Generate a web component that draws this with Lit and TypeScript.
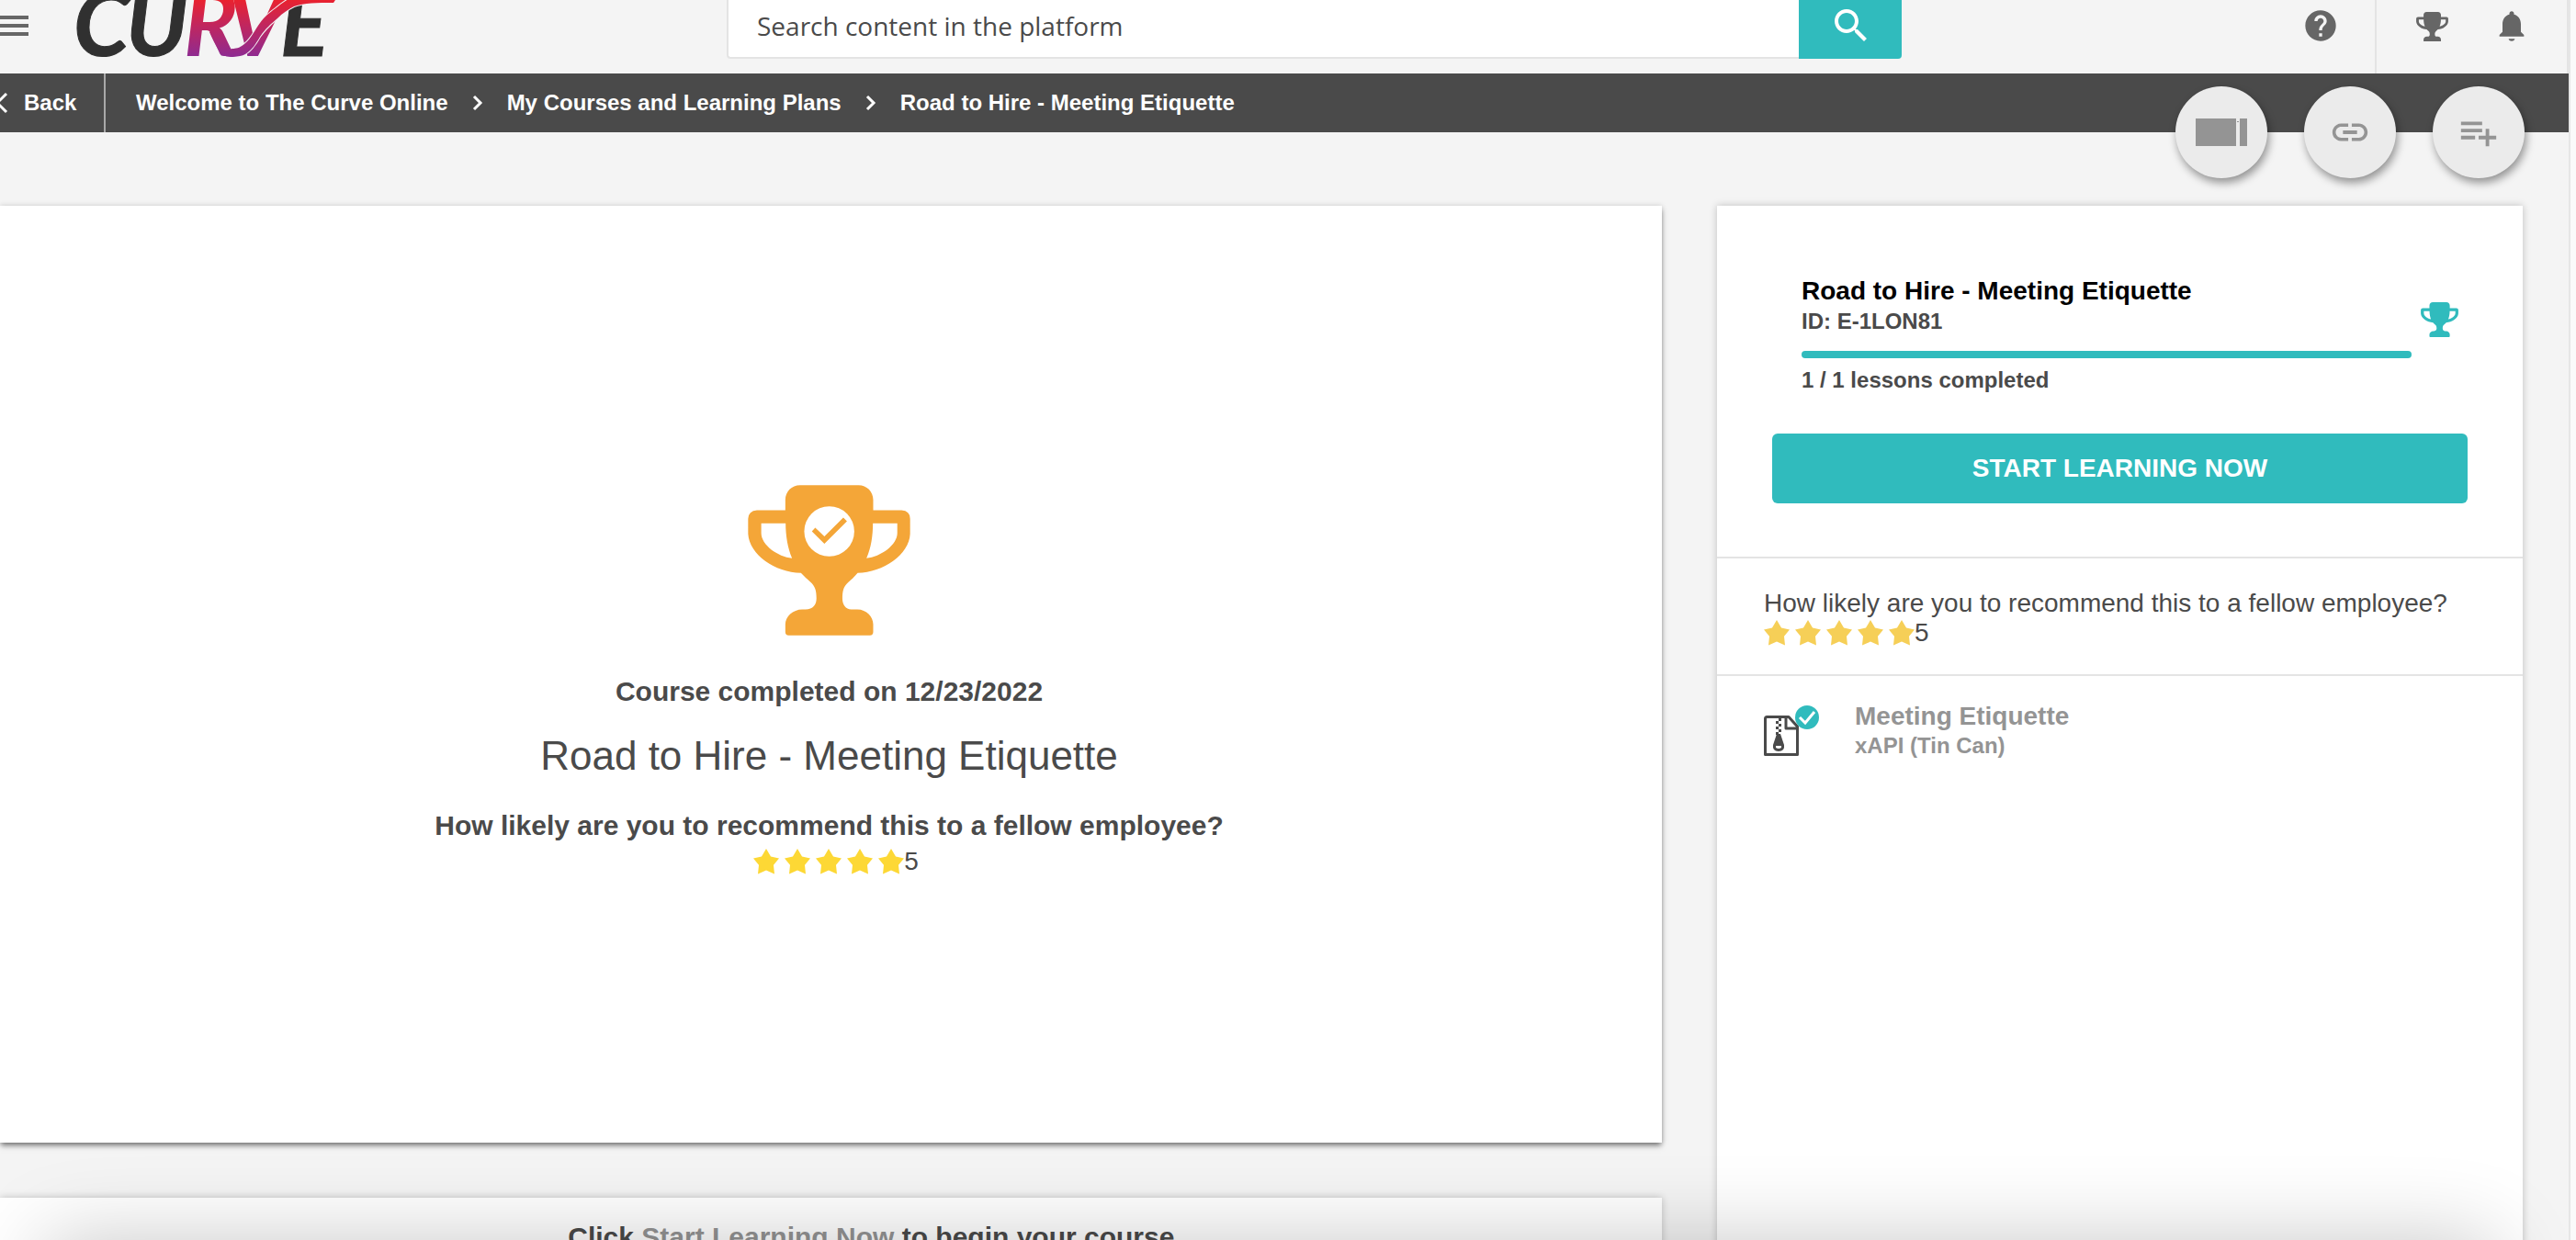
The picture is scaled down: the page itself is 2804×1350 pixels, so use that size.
import { LitElement, html, css, svg } from "lit";
import { customElement, property } from "lit/decorators.js";

const TROPHY =
  "M224 166V132C224 105 245 84 272 84H464C491 84 512 105 512 132V166H605Q633 168 633 194V243C630 310 545 370 461 371C450 385 440 392 430 402C415 415 411 430 411 455C411 475 422 491 440 491H460C490 491 512 515 512 540V565Q512 576 501 576H235Q224 576 224 565V540C224 515 248 491 280 491H290C315 491 326 475 326 455C326 430 322 414 305 400C295 390 287 384 275 371C190 370 106 310 102 243V194Q103 168 131 166ZM145 209V240C145 280 200 318 246 323C232 290 225 250 225 209ZM511 209C511 250 505 290 490 323C536 318 591 280 591 240V209Z";

@customElement("trophy-icon")
export class TrophyIcon extends LitElement {
  @property({ type: Boolean }) checked = false;

  static styles = css`
    :host {
      display: block;
    }
    svg {
      display: block;
      width: 100%;
      height: auto;
      fill: currentColor;
    }
  `;

  render() {
    return html`<svg viewBox="101 83 533 494" aria-hidden="true">
      <path d=${TROPHY} fill-rule="evenodd"></path>
      ${this.checked
        ? svg`<circle cx="368" cy="235" r="82" fill="#fff"></circle>
            <path d="M311 235L322 223L352 252L414 190L426 202L352 276Z"></path>`
        : null}
    </svg>`;
  }
}

@customElement("star-rating")
export class StarRating extends LitElement {
  @property({ type: Number }) value = 5;

  static styles = css`
    :host {
      display: flex;
      align-items: center;
      height: 32px;
      font-size: 28px;
      line-height: 32px;
      color: #4a4a4a;
    }
    .stars {
      display: flex;
      gap: 6px;
    }
    svg {
      display: block;
      width: 28px;
      height: 28px;
      fill: var(--star-color, #fdd835);
    }
  `;

  render() {
    return html`<span class="stars" role="img" aria-label="Rating">
        ${Array.from(
          { length: this.value },
          () => html`<svg viewBox="0 0 28 28">
            <path
              d="M14 0L19 8.600L28 10.400L22 17.700L23 27.600L14 23.600L5 27.600L6 17.700L0 10.400L9 8.600Z"
            ></path>
          </svg>`
        )}</span
      ><span>${this.value}</span>`;
  }
}

@customElement("app-root")
export class AppRoot extends LitElement {
  static styles = css`
    :host {
      display: block;
      font-family: "Liberation Sans", Arial, sans-serif;
      color: #4a4a4a;
    }
    * {
      box-sizing: border-box;
    }
    h1,
    h2,
    p,
    ol {
      margin: 0;
      padding: 0;
    }
    button {
      border: 0;
      padding: 0;
      background: none;
      font: inherit;
      color: inherit;
      cursor: pointer;
    }
    a {
      color: inherit;
      text-decoration: none;
    }
    svg {
      display: block;
    }
    .page {
      position: relative;
      height: 100vh;
      overflow: hidden;
      display: flex;
      flex-direction: column;
      background: #f4f4f4;
      border-right: 6px solid #fafafa;
    }
    .frame {
      flex: 1;
      display: flex;
      flex-direction: column;
      border-right: 2px solid #e6e6e6;
      min-height: 0;
    }

    /* header */
    .header {
      height: 80px;
      flex: none;
      display: grid;
      grid-template-columns: 791fr 1279fr 724fr;
      border-right: 2px solid #e4e4e4;
      color: #666;
    }
    .brand {
      display: flex;
      align-items: flex-start;
      gap: 52px;
    }
    .menu {
      width: 31px;
      padding-top: 17px;
    }
    .logo svg {
      width: 290px;
      height: 66px;
      overflow: hidden;
    }
    .search {
      display: flex;
      height: 64px;
    }
    .search input {
      flex: 1;
      min-width: 0;
      border: 2px solid #e4e4e4;
      border-top: 0;
      border-right: 0;
      border-radius: 0 0 0 4px;
      padding: 0 32px 6px 31px;
      background: #fff;
      font: 28px "Open Sans", "Noto Sans", sans-serif;
      color: #4a4a4a;
      outline: 0;
    }
    .search input::placeholder {
      color: #4a4a4a;
      opacity: 1;
    }
    .search button {
      width: 112px;
      padding: 4px 31px 12px 33px;
      background: #30bbbd;
      border-radius: 0 0 4px 0;
    }
    .actions {
      display: flex;
      justify-content: flex-end;
      gap: 39px;
    }
    .actions button {
      width: 40px;
      height: 56px;
      display: flex;
      align-items: center;
      justify-content: center;
    }
    .account {
      display: flex;
      gap: 47px;
      padding: 0 40px;
      border-left: 2px solid #e4e4e4;
    }
    .account trophy-icon {
      width: 35px;
      padding-top: 2px;
    }

    /* breadcrumb bar */
    .crumbs {
      height: 64px;
      flex: none;
      display: flex;
      align-items: stretch;
      background: #4a4a4a;
      color: #fff;
      font-size: 24px;
      font-weight: 700;
      line-height: 64px;
    }
    .back {
      width: 115px;
      display: flex;
      align-items: center;
      gap: 17px;
      border-right: 2px solid #a8a8a8;
    }
    .trail {
      display: flex;
      align-items: center;
      gap: 26px;
      padding-left: 33px;
      list-style: none;
    }
    .trail li {
      display: flex;
      align-items: center;
      gap: 26px;
    }

    /* floating actions */
    .fabs {
      position: absolute;
      top: 94px;
      right: 50px;
      display: flex;
      gap: 40px;
    }
    .fabs button {
      width: 100px;
      height: 100px;
      display: flex;
      align-items: center;
      justify-content: center;
      border-radius: 50%;
      background: #ebebeb;
      color: #949494;
      box-shadow: 2px 5px 10px rgba(0, 0, 0, 0.4);
    }

    /* content */
    .content {
      flex: 1;
      min-height: 0;
      display: grid;
      grid-template-columns: 1809fr 877fr;
      gap: 60px;
      padding: 80px 50px 0 0;
    }
    .main {
      display: flex;
      flex-direction: column;
      gap: 60px;
    }
    .card {
      background: #fff;
      box-shadow: 0 0 8px rgba(0, 0, 0, 0.22);
    }
    .completion {
      display: flex;
      flex-direction: column;
      align-items: center;
      padding: 304px 4px 290px 0;
      box-shadow: 0 4px 6px -1px rgba(0, 0, 0, 0.5), 0 0 6px rgba(0, 0, 0, 0.14);
    }
    .completion trophy-icon {
      width: 177px;
      color: #f4a638;
    }
    .strong {
      font-size: 30px;
      font-weight: 700;
      line-height: 36px;
    }
    .date {
      margin-top: 43px;
    }
    .course {
      margin: 26px 0 32px;
      font-size: 44px;
      font-weight: 400;
      line-height: 52px;
    }
    .completion star-rating {
      margin-top: 5px;
      padding-left: 15px;
    }
    .hint {
      flex: none;
      padding: 25px 0 80px 96px;
      text-align: center;
    }
    .hint a {
      color: #949494;
    }

    /* sidebar */
    .summary {
      padding: 77px 60px 58px;
      border-bottom: 2px solid #e4e4e4;
      font-size: 24px;
      font-weight: 700;
      line-height: 32px;
    }
    .overview {
      display: flex;
      gap: 10px;
      padding: 0 10px 0 32px;
      margin-bottom: 42px;
    }
    .overview trophy-icon {
      width: 41px;
      padding-top: 28px;
      color: #30bbbd;
    }
    .info {
      flex: 1;
      display: flex;
      flex-direction: column;
    }
    .info h2 {
      margin-bottom: 1px;
      font-size: 28px;
      line-height: 32px;
      color: #000;
    }
    progress {
      appearance: none;
      display: block;
      width: 100%;
      height: 8px;
      margin: 16px 0 8px;
      border: 0;
      border-radius: 4px;
      overflow: hidden;
    }
    progress::-webkit-progress-bar {
      background: #e4e4e4;
    }
    progress::-webkit-progress-value {
      background: #30bbbd;
    }
    .start {
      width: 100%;
      height: 76px;
      border-radius: 6px;
      background: #30bbbd;
      color: #fff;
      font-size: 28px;
      font-weight: 700;
    }
    .survey {
      padding: 33px 51px 29px;
      border-bottom: 2px solid #e4e4e4;
      font-size: 28px;
      line-height: 32px;
    }
    .survey star-rating {
      --star-color: #f6cf57;
    }
    .lesson {
      display: flex;
      gap: 39px;
      padding: 28px 51px;
      color: #949494;
      font-size: 24px;
      font-weight: 700;
      line-height: 32px;
    }
    .lesson svg {
      margin-top: 3px;
    }
    .lesson span {
      display: block;
    }
    .lesson .name {
      font-size: 28px;
    }

    .edge-shade {
      position: absolute;
      left: 50px;
      right: 84px;
      bottom: -100px;
      height: 100px;
      box-shadow: 0 0 90px rgba(0, 0, 0, 0.22);
      pointer-events: none;
    }
  `;

  private crumbs = [
    "Welcome to The Curve Online",
    "My Courses and Learning Plans",
    "Road to Hire - Meeting Etiquette",
  ];

  private renderLogo() {
    return html`<svg viewBox="0 0 290 66" role="img" aria-label="Curve">
      <defs>
        <linearGradient id="flame" gradientUnits="userSpaceOnUse" x1="0" y1="0" x2="0" y2="62">
          <stop offset="0" stop-color="#e9222f"></stop>
          <stop offset="0.45" stop-color="#c0265f"></stop>
          <stop offset="1" stop-color="#8d2b92"></stop>
        </linearGradient>
      </defs>
      <g
        font-family="Lato, sans-serif"
        font-size="98"
        font-weight="700"
        font-style="italic"
        stroke-width="1"
      >
        <text x="-3" y="61" fill="#303030" stroke="#303030">C</text>
        <text x="54" y="61" fill="#303030" stroke="#303030">U</text>
        <text x="222" y="61" fill="#303030" stroke="#303030">E</text>
        <text x="164" y="61" fill="url(#flame)">V</text>
        <path
          d="M145 35C148 42 151 48 154 53C157 59 162 62 168 62C175 62 180 61 184 59C191 55 196 47 200 40C206 31 212 26 219 20C225 14 231 10 237 7C248 3 262 3 280 3L286 -6H240C232 -2 224 3 217 9C210 14 205 18 200 25C194 33 191 41 184 47C179 52 174 53 170 53C166 54 164 54 162 52C158 47 157 40 155 34Z"
          fill="url(#flame)"
          stroke="#f4f4f4"
          stroke-width="2"
          paint-order="stroke"
        ></path>
        <text x="117" y="61" fill="url(#flame)">R</text>
      </g>
    </svg>`;
  }

  private chevron() {
    return html`<svg width="12" height="18" viewBox="0 0 12 18" aria-hidden="true">
      <path d="M2 2L9 9L2 16" fill="none" stroke="#fff" stroke-width="3"></path>
    </svg>`;
  }

  render() {
    return html`<div class="page">
      <div class="frame">
        <header class="header">
          <div class="brand">
            <button class="menu" aria-label="Menu">
              <svg width="31" height="22" viewBox="0 0 31 22" fill="currentColor">
                <path d="M0 0H31V4H0ZM0 9H31V13H0ZM0 18H31V22H0Z"></path>
              </svg>
            </button>
            <a class="logo" href="#">${this.renderLogo()}</a>
          </div>
          <form class="search" role="search">
            <input type="text" aria-label="Search" placeholder="Search content in the platform" />
            <button type="button" aria-label="Submit search">
              <svg width="48" height="48" viewBox="0 0 24 24" fill="#fff">
                <path
                  d="M15.5 14h-.79l-.28-.27C15.41 12.59 16 11.11 16 9.5 16 5.91 13.09 3 9.5 3S3 5.91 3 9.5 5.91 16 9.5 16c1.61 0 3.09-.59 4.23-1.57l.27.28v.79l5 4.99L20.49 19l-4.99-5zm-6 0C7.01 14 5 11.99 5 9.5S7.01 5 9.5 5 14 7.01 14 9.5 11.99 14 9.5 14z"
                ></path>
              </svg>
            </button>
          </form>
          <div class="actions">
            <button aria-label="Help">
              <svg width="40" height="40" viewBox="0 0 24 24" fill="currentColor">
                <path
                  d="M12 2C6.48 2 2 6.48 2 12s4.48 10 10 10 10-4.48 10-10S17.52 2 12 2zm1 17h-2v-2h2v2zm2.07-7.75l-.9.92C13.45 12.9 13 13.5 13 15h-2v-.5c0-1.1.45-2.1 1.17-2.83l1.24-1.26c.37-.36.59-.86.59-1.41 0-1.1-.9-2-2-2s-2 .9-2 2H8c0-2.21 1.79-4 4-4s4 1.79 4 4c0 .88-.36 1.68-.93 2.25z"
                ></path>
              </svg>
            </button>
            <div class="account">
              <button aria-label="Achievements"><trophy-icon></trophy-icon></button>
              <button aria-label="Notifications">
                <svg width="40" height="40" viewBox="0 0 24 24" fill="currentColor">
                  <path
                    d="M12 22c1.1 0 2-.7 2-1.5h-4c0 .8.89 1.500 2 1.500zm6-6v-5c0-3.070-1.640-5.640-4.500-6.320V4c0-.83-.67-1.500-1.500-1.500s-1.500.67-1.500 1.500v.68C7.630 5.360 6 7.920 6 11v5l-2 2v1h16v-1l-2-2z"
                  ></path>
                </svg>
              </button>
            </div>
          </div>
        </header>

        <nav class="crumbs" aria-label="Breadcrumb">
          <a class="back" href="#">
            <svg width="9" height="24" viewBox="0 0 9 24" aria-hidden="true">
              <path d="M7 2L-3 12L7 22" fill="none" stroke="#fff" stroke-width="3"></path>
            </svg>
            Back
          </a>
          <ol class="trail">
            ${this.crumbs.map(
              (c, i) => html`<li>${i ? this.chevron() : null}<a href="#">${c}</a></li>`
            )}
          </ol>
        </nav>

        <div class="content">
          <main class="main">
            <section class="card completion">
              <trophy-icon checked></trophy-icon>
              <p class="strong date">Course completed on 12/23/2022</p>
              <h1 class="course">Road to Hire - Meeting Etiquette</h1>
              <p class="strong">How likely are you to recommend this to a fellow employee?</p>
              <star-rating></star-rating>
            </section>
            <section class="card hint strong">
              Click <a href="#">Start Learning Now</a> to begin your course.
            </section>
          </main>

          <aside class="card">
            <section class="summary">
              <div class="overview">
                <div class="info">
                  <h2>Road to Hire - Meeting Etiquette</h2>
                  <span>ID: E-1LON81</span>
                  <progress value="1" max="1" aria-label="Lessons completed"></progress>
                  <span>1 / 1 lessons completed</span>
                </div>
                <trophy-icon></trophy-icon>
              </div>
              <button class="start">START LEARNING NOW</button>
            </section>
            <section class="survey">
              <p>How likely are you to recommend this to a fellow employee?</p>
              <star-rating></star-rating>
            </section>
            <a class="lesson" href="#">
              <svg width="60" height="58" viewBox="0 0 60 58" aria-hidden="true">
                <path
                  d="M3.500 13.500H27L36.500 24V54.500H1.500V15.500Q1.500 13.500 3.500 13.500ZM24 14V26H36"
                  fill="#fff"
                  stroke="#4a4a4a"
                  stroke-width="3"
                  stroke-linejoin="round"
                ></path>
                <path
                  d="M16 15h3v3h-3zM13 18h3v3h-3zM16 21h3v3h-3zM13 24h3v3h-3zM16 27h3v3h-3zM13 30h3v3h-3z"
                  fill="#4a4a4a"
                ></path>
                <path
                  fill-rule="evenodd"
                  d="M14 32H18L22 44Q23 51 16 51Q9 51 10 44ZM13 45V47Q16 49 19 47V45Z"
                  fill="#4a4a4a"
                ></path>
                <circle cx="47" cy="14" r="13" fill="#30bbbd"></circle>
                <path d="M39 14L45 20L55 8" fill="none" stroke="#fff" stroke-width="3"></path>
              </svg>
              <span>
                <span class="name">Meeting Etiquette</span>
                <span>xAPI (Tin Can)</span>
              </span>
            </a>
          </aside>
        </div>
      </div>

      <div class="fabs">
        <button aria-label="Toggle panel">
          <svg width="56" height="30" viewBox="0 0 56 30" fill="currentColor">
            <path d="M0 0H44V30H0ZM48 0H56V30H48ZM45 3H47V4H45Z"></path>
          </svg>
        </button>
        <button aria-label="Copy link">
          <svg width="46" height="46" viewBox="0 0 24 24" fill="currentColor">
            <path
              d="M3.900 12c0-1.710 1.390-3.100 3.100-3.100h4V7H7c-2.760 0-5 2.240-5 5s2.240 5 5 5h4v-1.900H7c-1.710 0-3.100-1.390-3.100-3.100zM8 13h8v-2H8v2zm9-6h-4v1.900h4c1.710 0 3.100 1.390 3.100 3.100s-1.390 3.100-3.100 3.100h-4V17h4c2.760 0 5-2.240 5-5s-2.240-5-5-5z"
            ></path>
          </svg>
        </button>
        <button aria-label="Add to list">
          <svg width="46" height="46" viewBox="0 0 24 24" fill="currentColor">
            <path
              d="M14 10H2v2h12v-2zm0-4H2v2h12V6zm4 8v-4h-2v4h-4v2h4v4h2v-4h4v-2h-4zM2 16h8v-2H2v2z"
            ></path>
          </svg>
        </button>
      </div>
      <div class="edge-shade"></div>
    </div>`;
  }
}
